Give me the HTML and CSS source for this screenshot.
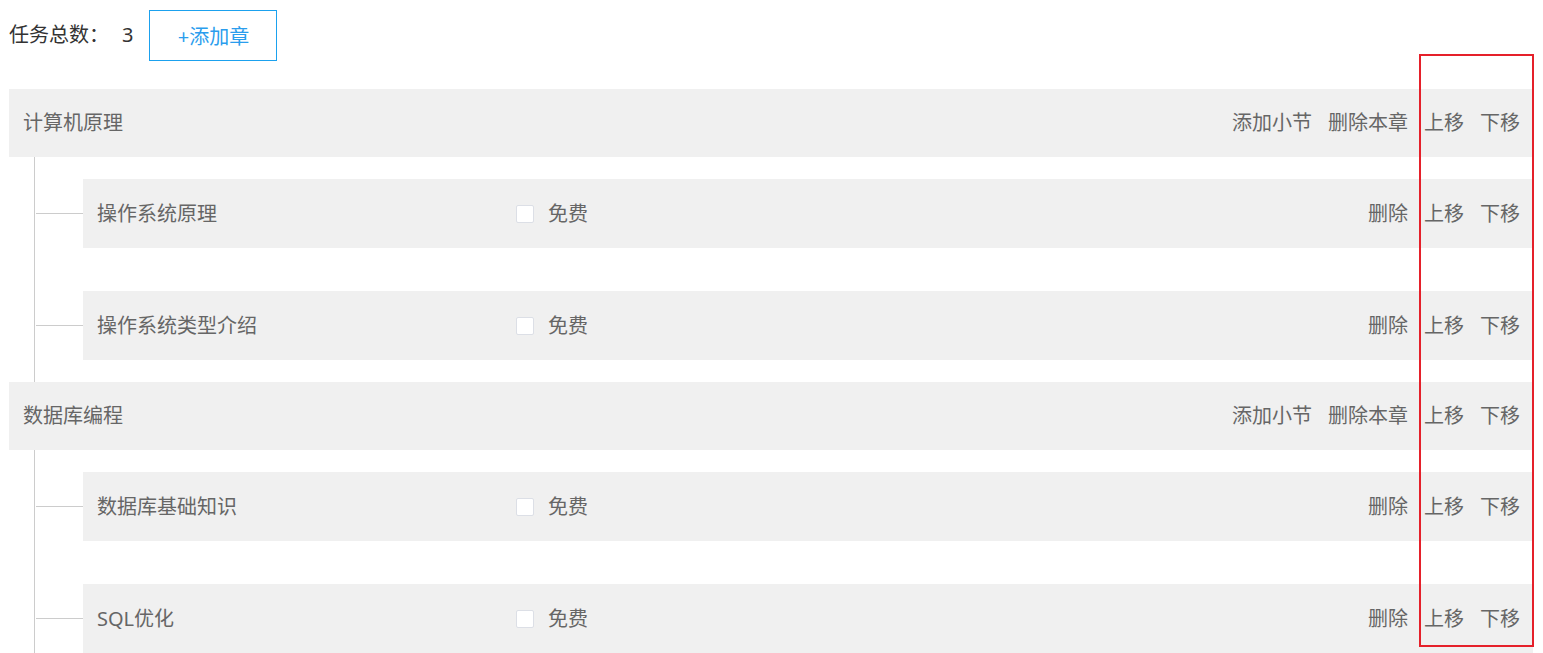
FILE: index.html
```html
<!DOCTYPE html>
<html lang="zh-CN">
<head>
    <meta charset="UTF-8">
    <meta name="viewport" content="width=device-width, initial-scale=1.0">
    <title>章节管理</title>
    <link rel="stylesheet" href="styles.css">
</head>
<body>
    <div class="page">
        <div class="toolbar">
            <span class="total">任务总数：<span class="count">3</span></span>
            <button type="button" class="add-btn">+添加章</button>
        </div>

        <div class="chapter">
            <div class="chapter-head">
                <span class="title">计算机原理</span>
                <div class="actions">
                    <a>添加小节</a>
                    <a>删除本章</a>
                    <a>上移</a>
                    <a>下移</a>
                </div>
            </div>
            <div class="sections">
                <div class="section">
                    <span class="section-title">操作系统原理</span>
                    <label class="free"><input type="checkbox"> 免费</label>
                    <div class="actions">
                        <a>删除</a>
                        <a>上移</a>
                        <a>下移</a>
                    </div>
                </div>
                <div class="section">
                    <span class="section-title">操作系统类型介绍</span>
                    <label class="free"><input type="checkbox"> 免费</label>
                    <div class="actions">
                        <a>删除</a>
                        <a>上移</a>
                        <a>下移</a>
                    </div>
                </div>
            </div>
        </div>

        <div class="chapter">
            <div class="chapter-head">
                <span class="title">数据库编程</span>
                <div class="actions">
                    <a>添加小节</a>
                    <a>删除本章</a>
                    <a>上移</a>
                    <a>下移</a>
                </div>
            </div>
            <div class="sections">
                <div class="section">
                    <span class="section-title">数据库基础知识</span>
                    <label class="free"><input type="checkbox"> 免费</label>
                    <div class="actions">
                        <a>删除</a>
                        <a>上移</a>
                        <a>下移</a>
                    </div>
                </div>
                <div class="section">
                    <span class="section-title">SQL优化</span>
                    <label class="free"><input type="checkbox"> 免费</label>
                    <div class="actions">
                        <a>删除</a>
                        <a>上移</a>
                        <a>下移</a>
                    </div>
                </div>
            </div>
        </div>

        <!-- highlight box around the move buttons -->
        <div class="mark"></div>
    </div>
</body>
</html>
```

FILE: styles.css
```css
body {
    margin: 0;
    font-family: "Noto Sans", "Noto Sans CJK SC", sans-serif;
    font-size: 20px;
    color: #666;
    background-color: #fff;
}
.page {
    position: relative;
    padding: 10px 10px 0 9px;
}
.toolbar {
    display: flex;
    align-items: center;
    height: 51px;
    margin-bottom: 28px;
}
.total {
    color: #333;
    line-height: 24px;
    margin-top: -2px;
}
.count {
    margin-left: 13px;
}
.add-btn {
    height: 51px;
    width: 128px;
    margin-left: 16px;
    padding: 0;
    border: 1px solid #1ba1ee;
    background-color: #fff;
    color: #2a9ded;
    font-family: inherit;
    font-size: 20px;
    cursor: pointer;
}
.chapter-head {
    display: flex;
    align-items: center;
    height: 68px;
    padding: 0 13px 0 14px;
    background-color: #f0f0f0;
}
.title {
    flex: 1;
    line-height: 24px;
}
.actions {
    display: flex;
    gap: 16px;
    margin-left: auto;
    line-height: 24px;
}
.actions a {
    cursor: pointer;
}
.sections {
    margin-left: 25px;
    border-left: 1px solid #ccc;
    padding: 22px 0 22px;
}
.section {
    position: relative;
    display: flex;
    align-items: center;
    height: 69px;
    margin-left: 48px;
    padding: 0 13px 0 14px;
    background-color: #f0f0f0;
}
.section + .section {
    margin-top: 43px;
}
.section::before {
    content: "";
    position: absolute;
    left: -47px;
    top: 34px;
    width: 47px;
    border-top: 1px solid #ccc;
}
.section-title {
    width: 419px;
    line-height: 24px;
}
.free {
    display: flex;
    align-items: center;
    gap: 14px;
    line-height: 24px;
}
.free input {
    appearance: none;
    width: 18px;
    height: 18px;
    margin: 0;
    border: 1px solid #dcdfe6;
    border-radius: 2px;
    background-color: #fff;
}
.mark {
    position: absolute;
    left: 1419px;
    top: 54px;
    width: 115px;
    height: 593px;
    box-sizing: border-box;
    border: 2px solid #e5202a;
}
```
